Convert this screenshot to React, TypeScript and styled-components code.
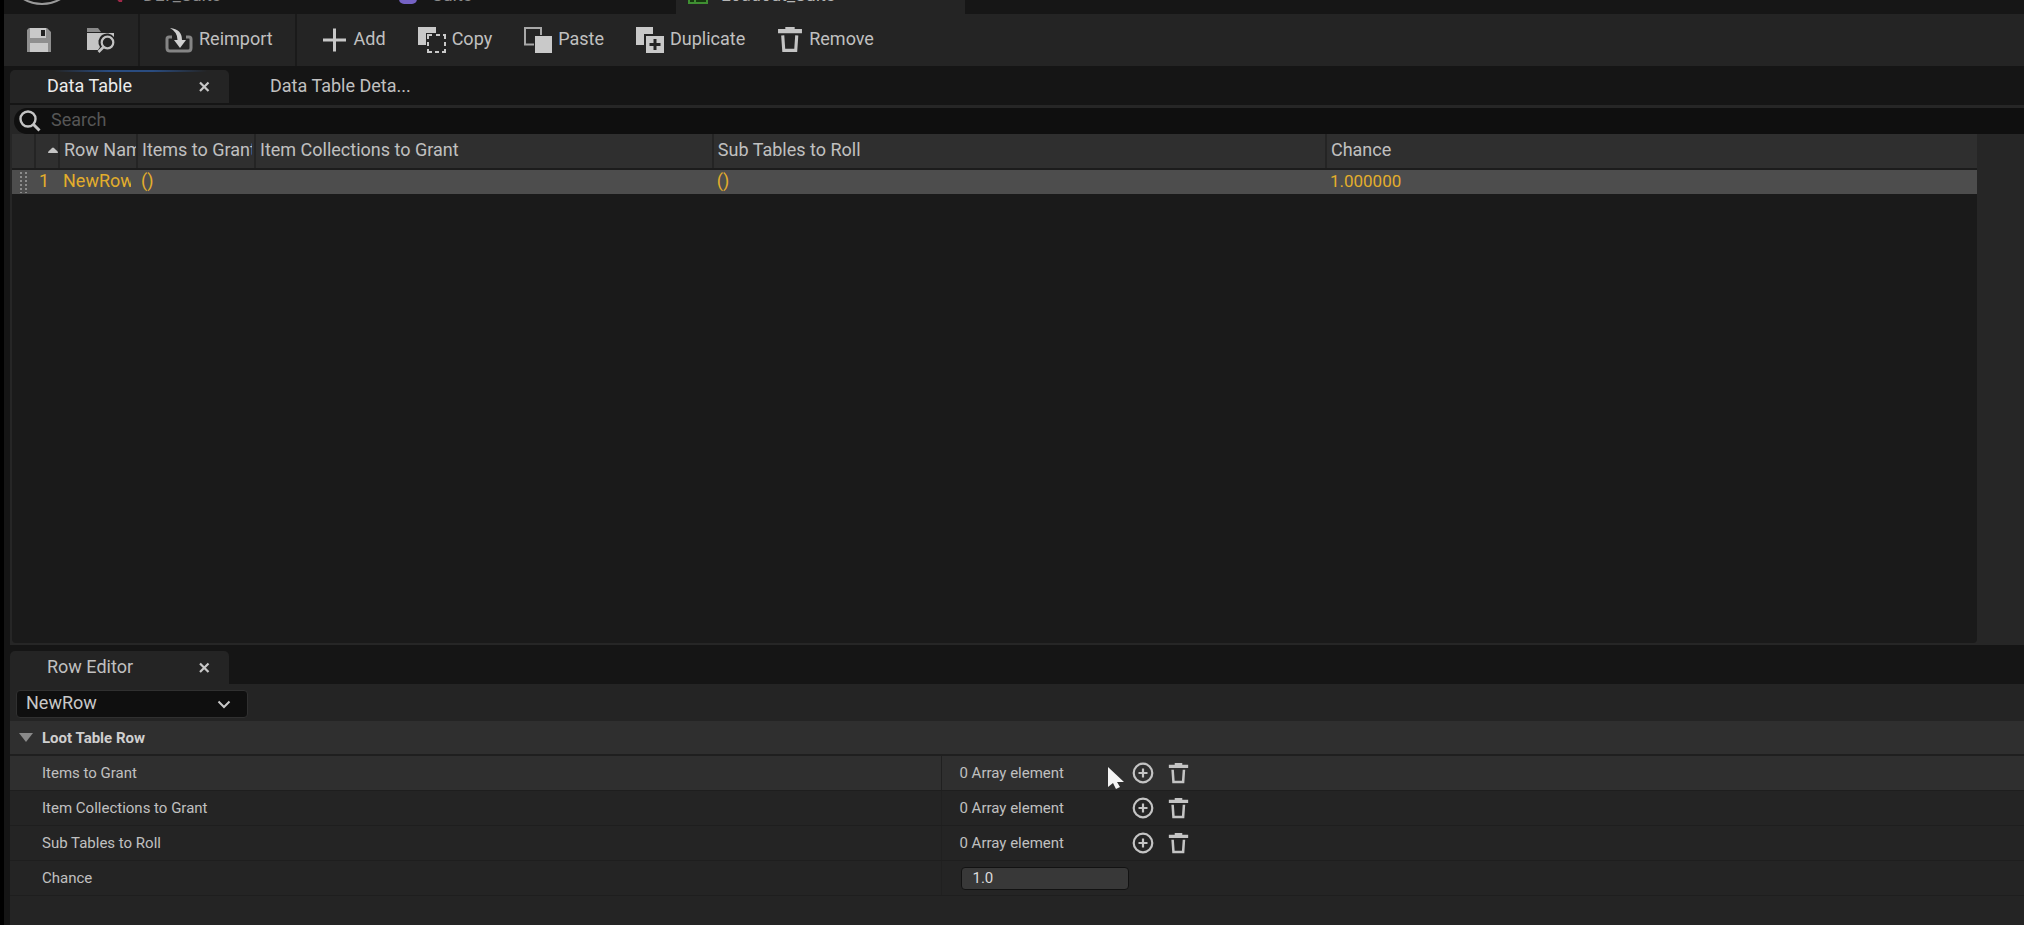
import React from "react";
import styled, { createGlobalStyle, css } from "styled-components";

const GlobalStyle = createGlobalStyle`
  * { box-sizing: border-box; }
  html, body, #root { height: 100%; }
  body { margin: 0; background: #000; color: #c0c0c0; font: 18px/24px Roboto, sans-serif; overflow: hidden; }
  button, input, select { font: inherit; color: inherit; margin: 0; padding: 0; border: 0; background: none; outline: 0; }
`;

const Window = styled.div`
  min-height: 100%;
  margin-left: 4px;
  display: flex;
  flex-direction: column;
  background: #151515;
`;

const AssetTabs = styled.header`
  height: 14px;
  flex: none;
  display: flex;
  align-items: flex-end;
  overflow: hidden;
  background: #161616;
`;

const Logo = styled.svg`
  flex: none;
  width: 94px;
  height: 14px;
`;

const AssetTab = styled.button<{ $active?: boolean }>`
  flex: none;
  width: 289px;
  height: 44px;
  display: flex;
  align-items: flex-end;
  gap: 13px;
  padding: 0 12px 7px;
  text-align: left;
  background: ${(p) => (p.$active ? "#242424" : "transparent")};
  color: ${(p) => (p.$active ? "#b4b4b4" : "#8a8a8a")};
  svg { flex: none; margin-bottom: 3px; }
`;

const Toolbar = styled.div`
  height: 52px;
  flex: none;
  display: flex;
  align-items: stretch;
  background: #242424;
`;

const ToolGroup = styled.div<{ $gap?: number }>`
  display: flex;
  align-items: center;
  gap: ${(p) => p.$gap ?? 0}px;
  padding: 0 22px;
  & + & { padding-left: 25px; border-left: 2px solid #1a1a1a; }
`;

const Tool = styled.button`
  display: flex;
  align-items: center;
  gap: 6px;
  height: 36px;
  svg { flex: none; display: block; }
  span { padding-bottom: 2px; }
`;

const TabStrip = styled.div<{ $inset?: number }>`
  flex: none;
  height: 39px;
  display: flex;
  align-items: flex-end;
  padding: 0 6px ${(p) => p.$inset ?? 0}px;
  background: #151515;
`;

const PanelTab = styled.div<{ $active?: boolean; $focused?: boolean }>`
  width: 219px;
  height: 33px;
  display: flex;
  align-items: center;
  justify-content: space-between;
  padding: 0 18px 2px 37px;
  border-radius: 5px 5px 0 0;
  ${(p) => !p.$active && css`padding-left: 41px;`}
  ${(p) => p.$active && css`background: #242424;`}
  ${(p) => p.$focused && css`
    color: #ececec;
    background: linear-gradient(90deg, #242424 20%, #2a4c80 45%, #2a4c80 65%, #242424 90%) top / 100% 2px no-repeat #242424;
  `}
`;

const Close = styled.button`
  width: 14px;
  height: 24px;
  svg { display: block; }
`;

const TablePanel = styled.section`
  flex: 1 0 auto;
  display: flex;
  flex-direction: column;
  margin-left: 6px;
  padding-top: 3px;
  background: #262626;
`;

const Search = styled.label`
  height: 26px;
  flex: none;
  display: flex;
  align-items: center;
  gap: 10px;
  margin-left: 4px;
  padding: 0 5px;
  border-radius: 13px 0 0 13px;
  background: #0f0f0f;
  input { flex: 1; height: 26px; padding-bottom: 4px; }
  input::placeholder { color: #565656; opacity: 1; }
`;

const Grid = styled.div`
  flex: 1;
  margin: 0 47px 2px 2px;
  border-radius: 0 0 4px 4px;
  background: #1a1a1a;
`;

const Table = styled.table`
  width: 100%;
  table-layout: fixed;
  border-collapse: collapse;
  th, td { padding: 0 0 2px 4px; text-align: left; font-weight: 400; white-space: nowrap; overflow: hidden; }
  th { height: 35px; background: #2f2f2f; border-bottom: 2px solid #1c1c1c; }
  th + th { border-left: 2px solid #242424; }
  td { height: 25px; line-height: 22px; background: #4d4d4d; color: #e3ae2c; }
  td:first-child { padding: 0 0 0 8px; }
  svg { display: block; }
`;

const NumberCell = styled.td`
  font-size: 17px;
`;

const Clip = styled.div<{ $inset: number }>`
  margin-right: ${(p) => p.$inset}px;
  overflow: hidden;
`;

const SortHead = styled.div`
  display: flex;
  justify-content: flex-end;
`;

const Editor = styled.section`
  flex: none;
  min-height: 241px;
  margin-left: 6px;
  background: #242424;
`;

const SelectBox = styled.div`
  width: 232px;
  height: 28px;
  margin: 0 6px;
  display: grid;
  align-items: center;
  border: 1px solid #303030;
  border-radius: 4px;
  background: #0f0f0f;
  select { grid-area: 1 / 1; appearance: none; height: 26px; padding: 0 0 2px 9px; color: #c8c8c8; }
  svg { grid-area: 1 / 1; justify-self: end; margin-right: 16px; pointer-events: none; }
`;

const SelectRow = styled.div`
  height: 37px;
  display: flex;
  align-items: center;
  padding-top: 3px;
`;

const Category = styled.button`
  width: 100%;
  height: 35px;
  display: flex;
  align-items: center;
  gap: 9px;
  padding-left: 9px;
  font-size: 15px;
  font-weight: 700;
  color: #cfcfcf;
  background: #2f2f2f;
  border-bottom: 2px solid #1f1f1f;
`;

const Property = styled.div<{ $hover?: boolean }>`
  height: 35px;
  display: grid;
  grid-template-columns: 46.3% 1fr;
  font-size: 15px;
  border-bottom: 1px solid #1e1e1e;
  background: ${(p) => (p.$hover ? "#2f2f2f" : "#242424")};
`;

const Name = styled.label`
  display: flex;
  align-items: center;
  padding-left: 32px;
  border-right: 1px solid #202020;
`;

const Value = styled.div`
  display: flex;
  align-items: center;
  padding-left: 17px;
`;

const Count = styled.output`
  width: 173px;
`;

const IconButton = styled.button`
  width: 22px;
  height: 22px;
  margin-right: 14px;
  svg { display: block; }
`;

const NumberBox = styled.input`
  && {
    width: 168px;
    height: 23px;
    padding-left: 10px;
    margin-left: 2px;
    border: 1px solid #121212;
    border-radius: 4px;
    background: #383838;
    color: #dcdcdc;
  }
`;

const Pointer = styled.svg`
  position: absolute;
  left: 1107px;
  top: 766px;
`;

const CloseIcon = () => (
  <svg width="14" height="24" viewBox="0 0 14 24" stroke="#c8c8c8" strokeWidth="2.2"><path d="M3 8.500l8.500 8.500M11.500 8.500L3 17" /></svg>
);
const SaveIcon = () => (
  <svg width="26" height="26" viewBox="0 0 26 26"><path fill="#8f8f8f" d="M1 3l2-2h18l4 4v20H1z" /><path fill="#c9c9c9" d="M4 1h16v10H4zM4 16h18v9H4z" /><path fill="#222" d="M15 3h4v6h-4z" /></svg>
);
const BrowseIcon = () => (
  <svg width="30" height="28" viewBox="0 0 30 28"><path fill="#8a8a8a" d="M1 2h11l3 4H1z" /><path fill="#c4c4c4" d="M1 7h27v4a8.500 8.500 0 0 0-14 10l-2 3H1z" /><circle cx="21.500" cy="16.500" r="5.800" fill="#242424" stroke="#c4c4c4" strokeWidth="2.200" /><path d="M17.500 21l-5 5" stroke="#c4c4c4" strokeWidth="2.600" /></svg>
);
const ReimportIcon = () => (
  <svg width="28" height="26" viewBox="0 0 28 26"><path fill="none" stroke="#858585" strokeWidth="3" d="M7 10H4q-2 0-2 2v9q0 3 3 3h18q3 0 3-3v-9q0-2-2-2h-3" /><path fill="#d0d0d0" d="M5 1q12 1 12 12h4l-6 8-6-8h3.500Q12.500 5 5 1z" /></svg>
);
const AddIcon = () => (
  <svg width="26" height="26" viewBox="0 0 26 26"><path d="M12.500 1.500v23M1 13h23" stroke="#c8c8c8" strokeWidth="3" /></svg>
);
const CopyIcon = () => (
  <svg width="28" height="26" viewBox="0 0 28 26"><path fill="#c9c9c9" d="M0 0h18v6H8v12H0z" /><path fill="none" stroke="#c9c9c9" strokeWidth="2" d="M10 12V8h4M18 8h4M25 8h2v4M27 15v4M27 22v3h-3M21 25h-4M14 25h-4v-3M10 19v-4" /></svg>
);
const PasteIcon = () => (
  <svg width="28" height="26" viewBox="0 0 28 26"><path fill="none" stroke="#a8a8a8" strokeWidth="2" d="M10 17.500H1V1h16v7" /><path fill="#c9c9c9" d="M11 9h17v17H11z" /></svg>
);
const DuplicateIcon = () => (
  <svg width="28" height="26" viewBox="0 0 28 26"><path fill="#c9c9c9" d="M0 0h17v7H8v11H0zM10 9h18v17H10z" /><path d="M19 12v11M13.500 17.500h11" stroke="#242424" strokeWidth="3" /></svg>
);
const TrashIcon = ({ size = 26 }: { size?: number }) => (
  <svg width={size} height={size} viewBox="0 0 25 25"><path fill="#c4c4c4" d="M8 0h9v2h7v4H1V2h7z" /><path fill="none" stroke="#c4c4c4" strokeWidth="3" d="M5.500 8l1 14.500h11.500l1-14.500" /></svg>
);
const PlusCircle = () => (
  <svg width="22" height="22" viewBox="0 0 22 22" fill="none" stroke="#c4c4c4" strokeWidth="2.200"><circle cx="11" cy="11" r="9.300" /><path d="M11 6.500v9M6.500 11h9" /></svg>
);
const SearchIcon = () => (
  <svg width="22" height="22" viewBox="0 0 22 22" fill="none" stroke="#c4c4c4" strokeWidth="2.400"><circle cx="9" cy="9" r="7.500" /><path d="M14.500 14.500l6 6" strokeWidth="3" /></svg>
);

const tools = [
  ["Add", AddIcon], ["Copy", CopyIcon], ["Paste", PasteIcon], ["Duplicate", DuplicateIcon], ["Remove", TrashIcon],
] as const;

const arrays = ["Items to Grant", "Item Collections to Grant", "Sub Tables to Roll"];

export default function App() {
  return (
    <>
      <GlobalStyle />
      <Window>
        <AssetTabs>
          <Logo viewBox="0 0 94 14"><circle cx="38" cy="-32" r="36" fill="none" stroke="#9a9a9a" strokeWidth="2" /></Logo>
          <AssetTab><svg width="20" height="20" viewBox="0 0 20 20"><path fill="#a02848" d="M1 8L10 0l4 8-2 10H9z" /></svg>DLT_Suits</AssetTab>
          <AssetTab><svg width="20" height="20" viewBox="0 0 20 20"><rect y="2" width="18" height="18" rx="5" fill="#7562c4" /></svg>Suits</AssetTab>
          <AssetTab $active><svg width="20" height="20" viewBox="0 0 20 20"><path fill="#16380f" stroke="#3f8f32" strokeWidth="2" d="M1 1h18v18H1zM1 7h18M7 1v18" /></svg>Loadout_Suits</AssetTab>
        </AssetTabs>
        <Toolbar>
          <ToolGroup $gap={34}>
            <Tool aria-label="Save"><SaveIcon /></Tool>
            <Tool aria-label="Browse to asset"><BrowseIcon /></Tool>
          </ToolGroup>
          <ToolGroup><Tool><ReimportIcon /><span>Reimport</span></Tool></ToolGroup>
          <ToolGroup $gap={32}>
            {tools.map(([label, Icon]) => <Tool key={label}><Icon /><span>{label}</span></Tool>)}
          </ToolGroup>
        </Toolbar>
        <TabStrip $inset={2}>
          <PanelTab $active $focused>Data Table<Close aria-label="Close Data Table"><CloseIcon /></Close></PanelTab>
          <PanelTab>Data Table Deta...</PanelTab>
        </TabStrip>
        <TablePanel>
          <Search><SearchIcon /><input placeholder="Search" aria-label="Search" /></Search>
          <Grid>
            <Table>
              <colgroup>
                <col style={{ width: 23 }} /><col style={{ width: 24 }} /><col style={{ width: 78 }} /><col style={{ width: 118 }} />
                <col style={{ width: "23.3%" }} /><col style={{ width: "31.2%" }} /><col />
              </colgroup>
              <thead>
                <tr>
                  <th /><th><SortHead><svg width="10" height="6" viewBox="0 0 10 6"><path fill="#c4c4c4" d="M0 6q0-2 2-3l2-2q1-1 2 0l2 2q2 1 2 3z" /></svg></SortHead></th>
                  <th><Clip $inset={0}>Row Name</Clip></th><th><Clip $inset={2}>Items to Grant</Clip></th>
                  <th>Item Collections to Grant</th><th>Sub Tables to Roll</th><th>Chance</th>
                </tr>
              </thead>
              <tbody>
                <tr>
                  <td><svg width="8" height="21" viewBox="0 0 8 21"><path d="M1 0v21M6 0v21" stroke="#8c8c8c" strokeWidth="2" strokeDasharray="2 2" /></svg></td>
                  <td>1</td><td><Clip $inset={6}>NewRow</Clip></td><td>()</td><td /><td>()</td><NumberCell>1.000000</NumberCell>
                </tr>
              </tbody>
            </Table>
          </Grid>
        </TablePanel>
        <TabStrip>
          <PanelTab $active>Row Editor<Close aria-label="Close Row Editor"><CloseIcon /></Close></PanelTab>
        </TabStrip>
        <Editor>
          <SelectRow>
            <SelectBox>
              <select aria-label="Row"><option>NewRow</option></select>
              <svg width="14" height="9" viewBox="0 0 14 9"><path d="M1.500 1.500L7 7l5.500-5.500" fill="none" stroke="#c8c8c8" strokeWidth="2" /></svg>
            </SelectBox>
          </SelectRow>
          <Category><svg width="14" height="9" viewBox="0 0 14 9"><path fill="#8a8a8a" d="M0 0h14L7 9z" /></svg>Loot Table Row</Category>
          {arrays.map((name, i) => (
            <Property key={name} $hover={i === 0}>
              <Name htmlFor={`array-${i}`}>{name}</Name>
              <Value>
                <Count id={`array-${i}`}>0 Array element</Count>
                <IconButton aria-label={`Add to ${name}`}><PlusCircle /></IconButton>
                <IconButton aria-label={`Clear ${name}`}><TrashIcon size={21} /></IconButton>
              </Value>
            </Property>
          ))}
          <Property>
            <Name htmlFor="chance">Chance</Name>
            <Value><NumberBox id="chance" defaultValue="1.0" /></Value>
          </Property>
        </Editor>
        <Pointer width="18" height="25" viewBox="0 0 18 25"><path fill="#f4f4f4" d="M1 1v20l5-4 3 6 4-2-3-5h7z" /></Pointer>
      </Window>
    </>
  );
}
